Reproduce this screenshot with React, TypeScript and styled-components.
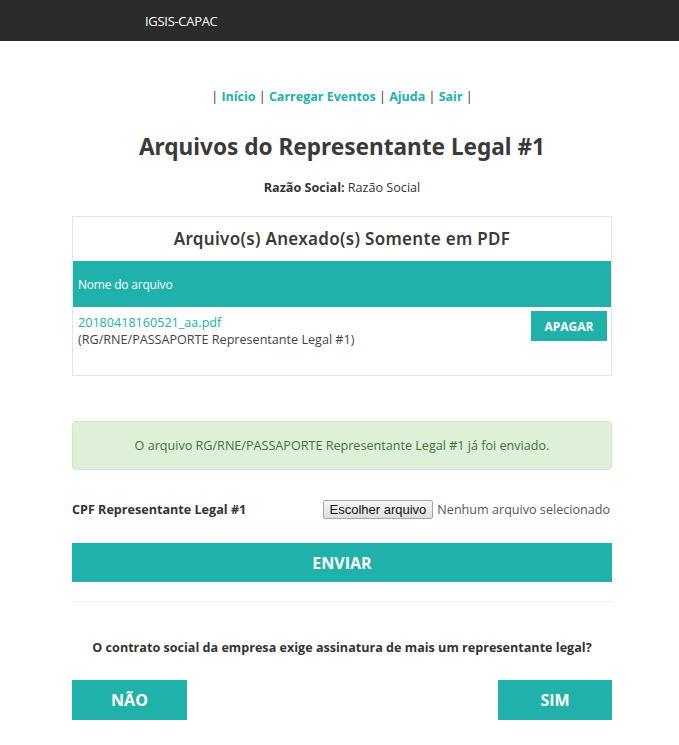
import React from "react";
import styled, { createGlobalStyle } from "styled-components";

const teal = "#20b2aa";

const Global = createGlobalStyle`
  html, body { margin: 0; padding: 0; background: #fff; }
  body { font-family: "Open Sans", "Noto Sans", sans-serif; color: #333; font-size: 12.6px; }
  * { box-sizing: border-box; }
`;

const TopBar = styled.header`
  height: 41px;
  background: #2b2b2b;
  display: flex;
  align-items: center;
  padding-left: 145px;
`;

const Brand = styled.span`
  color: #fff;
  font-size: 13px;
  letter-spacing: -0.3px;
`;

const Main = styled.main`
  width: 540px;
  margin: 0 0 0 72px;
  display: flex;
  flex-direction: column;
`;

const Nav = styled.nav`
  margin-top: 47px;
  text-align: center;
  font-size: 12.5px;
  color: #333;
  line-height: 18px;
`;

const NavLink = styled.a`
  color: ${teal};
  font-weight: 700;
  text-decoration: none;
`;

const Title = styled.h1`
  margin: 26px 0 0;
  text-align: center;
  font-family: "Noto Sans", "Open Sans", sans-serif;
  font-weight: 700;
  font-size: 22.6px;
  color: #3a3a3a;
  line-height: 30px;
`;

const Company = styled.p`
  margin: 17px 0 0;
  text-align: center;
  font-size: 12.6px;
  line-height: 17px;
`;

const Panel = styled.section`
  margin-top: 20px;
  border: 1px solid #e3e3e3;
  height: 160px;
  display: flex;
  flex-direction: column;
`;

const PanelTitle = styled.h2`
  margin: 0;
  height: 44px;
  padding-bottom: 2px;
  display: flex;
  align-items: center;
  justify-content: center;
  font-family: "Noto Sans", "Open Sans", sans-serif;
  font-weight: 600;
  font-size: 17px;
  letter-spacing: 0.3px;
  color: #3a3a3a;
`;

const TableHead = styled.div`
  background: ${teal};
  height: 46px;
  display: flex;
  align-items: center;
  padding-left: 5px;
  color: #fff;
  font-size: 12px;
  letter-spacing: -0.2px;
`;

const FileRow = styled.div`
  display: flex;
  justify-content: space-between;
  padding: 4px 4px 0 5px;
`;

const FileInfo = styled.div`
  display: flex;
  flex-direction: column;
  padding-top: 3px;
  font-size: 12.6px;
  line-height: 17px;
  color: #444;
`;

const FileLink = styled.a`
  color: ${teal};
  text-decoration: none;
  font-size: 12.6px;
`;

const SmallButton = styled.button`
  background: ${teal};
  border: none;
  color: #fff;
  font-family: "Open Sans", sans-serif;
  font-weight: 700;
  font-size: 12px;
  width: 76px;
  height: 30px;
  padding: 0;
`;

const Alert = styled.div`
  margin-top: 45px;
  height: 49px;
  background: #dff0d8;
  border: 1px solid #d6e9c6;
  border-radius: 4px;
  color: #3c763d;
  font-size: 12.6px;
  display: flex;
  align-items: center;
  justify-content: center;
`;

const UploadRow = styled.div`
  margin-top: 29px;
  display: flex;
  align-items: center;
  justify-content: space-between;
  height: 20px;
`;

const Label = styled.label`
  font-weight: 700;
  font-size: 12.6px;
  color: #333;
`;

const FilePicker = styled.div`
  display: flex;
  align-items: center;
  gap: 4px;
  font-size: 12.6px;
  color: #555;
  margin-right: 2px;
`;

const ChooseButton = styled.span`
  font-family: "Liberation Sans", Arial, sans-serif;
  font-size: 13px;
  color: #111;
  background: linear-gradient(#f6f6f6, #dedede);
  border: 1px solid #a6a6a6;
  border-radius: 2px;
  height: 19px;
  padding: 0 6px;
  display: flex;
  align-items: center;
`;

const BigButton = styled.button<{ $w?: string }>`
  background: ${teal};
  border: none;
  color: #fff;
  font-family: "Open Sans", sans-serif;
  font-weight: 700;
  font-size: 16px;
  height: 40px;
  width: ${(p) => p.$w ?? "100%"};
  padding: 0;
`;

const SendButton = styled(BigButton)`
  margin-top: 24px;
  height: 39px;
`;

const Rule = styled.hr`
  margin: 19px 0 0;
  border: none;
  border-top: 1px solid #eee;
`;

const Question = styled.p`
  margin: 37px 0 0;
  text-align: center;
  font-weight: 700;
  font-size: 12.6px;
  color: #333;
  line-height: 18px;
`;

const Choices = styled.div`
  margin-top: 23px;
  display: flex;
  justify-content: space-between;
`;

export default function App() {
  return (
    <>
      <Global />
      <TopBar>
        <Brand>IGSIS-CAPAC</Brand>
      </TopBar>
      <Main>
        <Nav>
          | <NavLink href="#">Início</NavLink> | <NavLink href="#">Carregar Eventos</NavLink> |{" "}
          <NavLink href="#">Ajuda</NavLink> | <NavLink href="#">Sair</NavLink> |
        </Nav>
        <Title>Arquivos do Representante Legal #1</Title>
        <Company>
          <b>Razão Social:</b> Razão Social
        </Company>
        <Panel>
          <PanelTitle>Arquivo(s) Anexado(s) Somente em PDF</PanelTitle>
          <TableHead>Nome do arquivo</TableHead>
          <FileRow>
            <FileInfo>
              <FileLink href="#">20180418160521_aa.pdf</FileLink>
              <span>(RG/RNE/PASSAPORTE Representante Legal #1)</span>
            </FileInfo>
            <SmallButton>APAGAR</SmallButton>
          </FileRow>
        </Panel>
        <Alert>O arquivo RG/RNE/PASSAPORTE Representante Legal #1 já foi enviado.</Alert>
        <UploadRow>
          <Label>CPF Representante Legal #1</Label>
          <FilePicker>
            <ChooseButton>Escolher arquivo</ChooseButton>
            <span>Nenhum arquivo selecionado</span>
          </FilePicker>
        </UploadRow>
        <SendButton>ENVIAR</SendButton>
        <Rule />
        <Question>O contrato social da empresa exige assinatura de mais um representante legal?</Question>
        <Choices>
          <BigButton $w="115px">NÃO</BigButton>
          <BigButton $w="114px">SIM</BigButton>
        </Choices>
      </Main>
    </>
  );
}
